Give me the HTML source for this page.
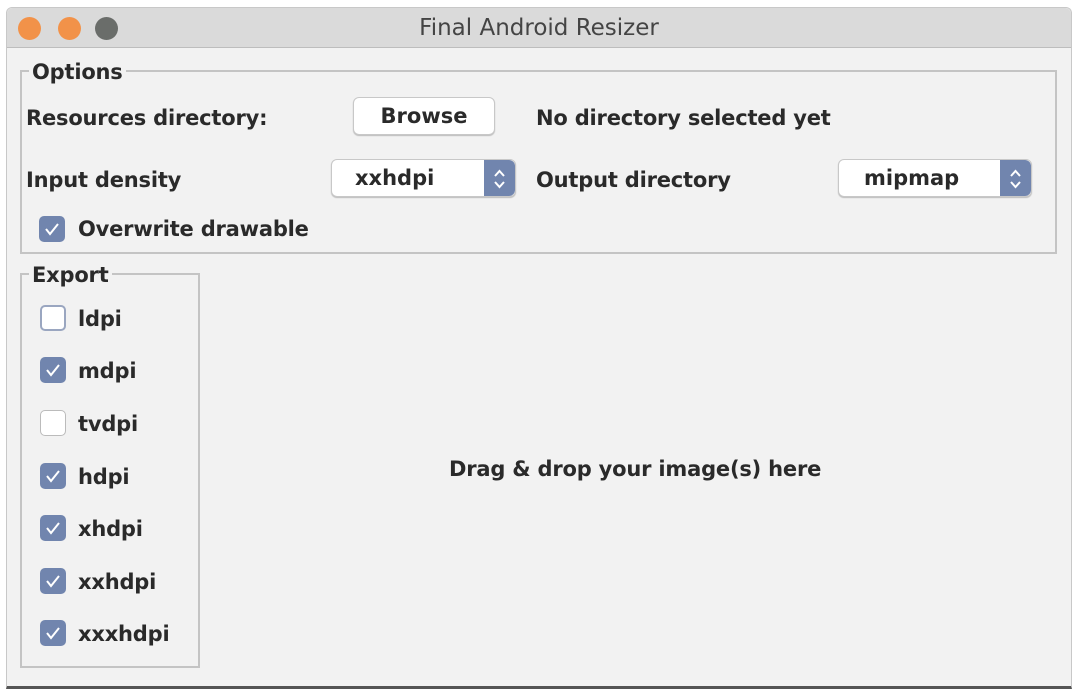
<!DOCTYPE html>
<html><head><style>
*{margin:0;padding:0;box-sizing:border-box}
body{width:1080px;height:692px;background:#fff;font-family:"DejaVu Sans","Liberation Sans",sans-serif;color:#2a2a2a;position:relative;overflow:hidden}
.win{position:absolute;left:6px;top:7px;width:1066px;height:682px;background:#f2f2f2;border:1px solid #c8c8c8;border-bottom:3px solid #555;border-radius:6px 6px 0 0}
.tb{position:absolute;left:0;top:0;width:100%;height:40px;background:#dadada;border-bottom:1px solid #bdbdbd;border-radius:6px 6px 0 0}
.dot{position:absolute;top:9px;width:23px;height:23px;border-radius:50%}
.t{position:absolute;font-size:21px;white-space:nowrap;font-weight:bold;letter-spacing:-0.2px}
.grp{position:absolute;border:2px solid #c4c4c4}
.lg{position:absolute;background:#f2f2f2;padding:0 3px;font-size:21px;font-weight:bold;letter-spacing:-0.2px}
.btn{position:absolute;background:#fff;border:1px solid #c8c8c8;border-radius:6px;font-size:21px;font-weight:bold;text-align:center;box-shadow:0 1px 1px #bbb}
.cb{position:absolute;width:26px;height:26px;border-radius:5px;background:#7185ae}
.cb.off{background:#fff;border:1px solid #bbb}
.cb svg{position:absolute;left:5px;top:6px}
.st{position:absolute;right:0;top:0;width:31px;height:100%;background:#7185ae;border-radius:0 6px 6px 0}
</style></head><body>
<div class="win">
<div class="tb">
<div class="dot" style="left:11px;background:#f29249"></div>
<div class="dot" style="left:51px;background:#f29249"></div>
<div class="dot" style="left:88px;background:#6a6d6a"></div>
<div style="position:absolute;left:0;width:100%;text-align:center;top:7px;color:#444;font-size:23px">Final Android Resizer</div>
</div>
</div>
<div class="grp" style="left:20px;top:70px;width:1037px;height:184px"></div>
<div class="lg" style="left:29px;top:60px">Options</div>
<div class="t" style="left:26px;top:106px">Resources directory:</div>
<div class="btn" style="left:353px;top:97px;width:142px;height:38px;line-height:36px">Browse</div>
<div class="t" style="left:536px;top:106px">No directory selected yet</div>
<div class="t" style="left:26px;top:168px">Input density</div>
<div class="btn" style="left:331px;top:159px;width:185px;height:38px;line-height:36px;text-align:left;padding-left:23px">xxhdpi<div class="st"><svg width="31" height="38"><path d="M11 16l4.5-5 4.5 5M11 22l4.5 5 4.5-5" stroke="#fff" stroke-width="2" fill="none"/></svg></div></div>
<div class="t" style="left:536px;top:168px">Output directory</div>
<div class="btn" style="left:838px;top:159px;width:194px;height:38px;line-height:36px;text-align:left;padding-left:25px">mipmap<div class="st"><svg width="31" height="38"><path d="M11 16l4.5-5 4.5 5M11 22l4.5 5 4.5-5" stroke="#fff" stroke-width="2" fill="none"/></svg></div></div>
<div class="cb" style="left:39px;top:216px"><svg width="16" height="14"><path d="M2 7l4 5 8-10" stroke="#fff" stroke-width="2" fill="none"/></svg></div>
<div class="t" style="left:78px;top:217px">Overwrite drawable</div>
<div class="grp" style="left:20px;top:273px;width:180px;height:395px"></div>
<div class="lg" style="left:29px;top:263px">Export</div>
<div class="cb off" style="left:40px;top:305px;border:2px solid #9aa6c0"></div><div class="t" style="left:78px;top:307px">ldpi</div>
<div class="cb" style="left:40px;top:357px"><svg width="16" height="14"><path d="M2 7l4 5 8-10" stroke="#fff" stroke-width="2" fill="none"/></svg></div><div class="t" style="left:78px;top:359px">mdpi</div>
<div class="cb off" style="left:40px;top:410px"></div><div class="t" style="left:78px;top:412px">tvdpi</div>
<div class="cb" style="left:40px;top:463px"><svg width="16" height="14"><path d="M2 7l4 5 8-10" stroke="#fff" stroke-width="2" fill="none"/></svg></div><div class="t" style="left:78px;top:465px">hdpi</div>
<div class="cb" style="left:40px;top:515px"><svg width="16" height="14"><path d="M2 7l4 5 8-10" stroke="#fff" stroke-width="2" fill="none"/></svg></div><div class="t" style="left:78px;top:517px">xhdpi</div>
<div class="cb" style="left:40px;top:568px"><svg width="16" height="14"><path d="M2 7l4 5 8-10" stroke="#fff" stroke-width="2" fill="none"/></svg></div><div class="t" style="left:78px;top:570px">xxhdpi</div>
<div class="cb" style="left:40px;top:620px"><svg width="16" height="14"><path d="M2 7l4 5 8-10" stroke="#fff" stroke-width="2" fill="none"/></svg></div><div class="t" style="left:78px;top:622px">xxxhdpi</div>
<div class="t" style="left:449px;top:457px">Drag &amp; drop your image(s) here</div>
</body></html>
